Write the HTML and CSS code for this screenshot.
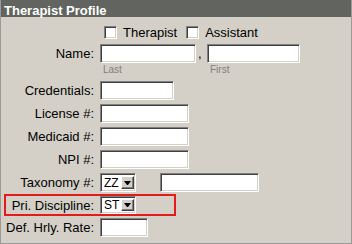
FILE: index.html
```html
<!DOCTYPE html>
<html lang="en">
<head>
    <meta charset="UTF-8">
    <title>Therapist Profile</title>
    <link rel="stylesheet" href="styles.css">
</head>
<body>
    <div class="panel">
        <div class="header">Therapist Profile</div>
        <form class="form">
            <div class="checks">
                <input type="checkbox" class="check" id="isTherapist">
                <label for="isTherapist" class="check-label">Therapist</label>
                <input type="checkbox" class="check second" id="isAssistant">
                <label for="isAssistant" class="check-label">Assistant</label>
            </div>

            <div class="row name-row">
                <label for="lastName">Name:</label>
                <input type="text" class="field w96" id="lastName">
                <span class="comma">,</span>
                <input type="text" class="field w93" id="firstName">
            </div>
            <div class="hints">
                <span class="hint-last">Last</span>
                <span>First</span>
            </div>

            <div class="row">
                <label for="credentials">Credentials:</label>
                <input type="text" class="field w74" id="credentials">
            </div>
            <div class="row">
                <label for="license">License #:</label>
                <input type="text" class="field w89" id="license">
            </div>
            <div class="row">
                <label for="medicaid">Medicaid #:</label>
                <input type="text" class="field w89" id="medicaid">
            </div>
            <div class="row">
                <label for="npi">NPI #:</label>
                <input type="text" class="field w89" id="npi">
            </div>
            <div class="row tax-row">
                <label>Taxonomy #:</label>
                <div class="select"><span class="select-text">ZZ</span><span class="arrow"></span></div>
                <input type="text" class="field w99 tax-code">
            </div>
            <div class="row highlight">
                <label>Pri. Discipline:</label>
                <div class="select small"><span class="select-text">ST</span><span class="arrow"></span></div>
            </div>
            <div class="row">
                <label for="rate">Def. Hrly. Rate:</label>
                <input type="text" class="field w48" id="rate">
            </div>
        </form>
    </div>
</body>
</html>
```

FILE: styles.css
```css
* {
    box-sizing: border-box;
}
body {
    margin: 0;
    font-family: "Liberation Sans", Arial, sans-serif;
    font-size: 13px;
    color: #000;
}
.panel {
    width: 352px;
    height: 244px;
    background-color: #d4d0c8;
    border: 1px solid #9c9a96;
    border-top: none;
}
.header {
    height: 17px;
    padding: 2px 0 0 3px;
    line-height: 17px;
    background-color: #62645f;
    color: #fff;
    font-weight: bold;
}
.form {
    margin: 0;
    padding-top: 7px;
}
.checks {
    display: flex;
    align-items: center;
    height: 17px;
    margin-bottom: 3px;
    padding-left: 103px;
}
.check {
    appearance: none;
    width: 13px;
    height: 13px;
    margin: 0;
    background: #fff;
    border: 1px solid;
    border-color: #808080 #fff #fff #808080;
    box-shadow: inset 1px 1px #404040, inset -1px -1px #d4d0c8;
}
.check.second {
    margin-left: 9px;
}
.check-label {
    margin-left: 6px;
}
.row {
    display: flex;
    align-items: center;
    height: 19px;
    margin-bottom: 4px;
}
.row label {
    width: 93px;
    margin-right: 6px;
    text-align: right;
    white-space: nowrap;
}
.name-row {
    margin-bottom: 0;
}
.field {
    height: 19px;
    margin: 0;
    padding: 0 2px;
    font: inherit;
    background: #fff;
    border: 1px solid;
    border-color: #808080 #fff #fff #808080;
    box-shadow: inset 1px 1px #404040, inset -1px -1px #d4d0c8;
    outline: none;
}
.w48 { width: 48px; }
.w74 { width: 74px; }
.w89 { width: 89px; }
.w93 { width: 93px; }
.w96 { width: 96px; }
.w99 { width: 99px; }
.comma {
    width: 11px;
    padding-left: 2px;
}
.hints {
    display: flex;
    height: 14px;
    margin-bottom: 4px;
    padding: 1px 0 0 102px;
    font-size: 10px;
    line-height: 12px;
    color: #808080;
}
.hint-last {
    width: 107px;
}
.select {
    display: flex;
    align-items: center;
    width: 36px;
    height: 19px;
    padding: 2px 1px 2px 2px;
    background: #fff;
    border: 1px solid;
    border-color: #808080 #fff #fff #808080;
    box-shadow: inset 1px 1px #404040, inset -1px -1px #d4d0c8;
}
.select.small {
    height: 18px;
}
.select-text {
    flex: 1;
    padding-left: 1px;
    font-size: 12px;
}
.arrow {
    display: flex;
    align-items: center;
    justify-content: center;
    width: 13px;
    height: 100%;
    background: #d4d0c8;
    border: 1px solid;
    border-color: #fff #404040 #404040 #fff;
    box-shadow: inset -1px -1px #808080;
}
.arrow::after {
    content: "";
    width: 1px;
    border-top: 4px solid #000;
    border-left: 3px solid transparent;
    border-right: 3px solid transparent;
}
.tax-row {
    margin-bottom: 2px;
}
.tax-code {
    margin-left: 24px;
}
.highlight {
    width: 172px;
    height: 22px;
    margin: 0 0 2px 3px;
    border: 2px solid #e41b1b;
}
.highlight label {
    width: 88px;
}
```
